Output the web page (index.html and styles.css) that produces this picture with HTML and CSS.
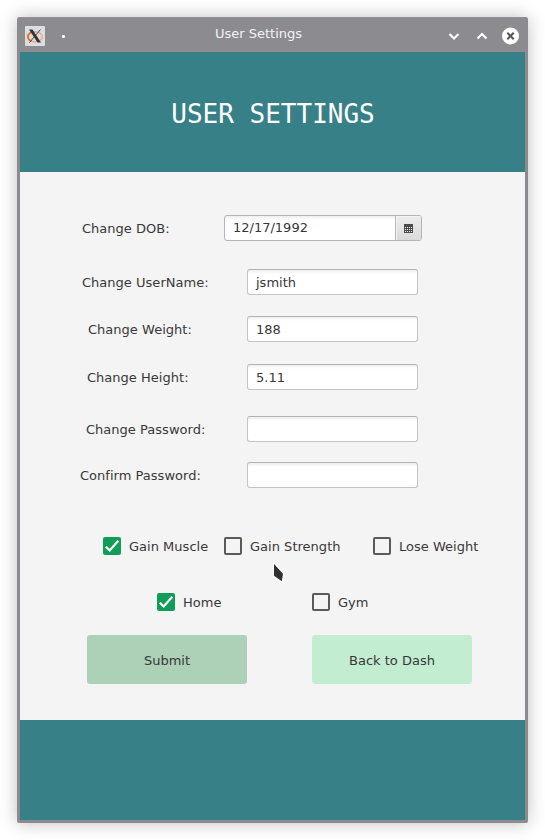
FILE: index.html
```html
<!DOCTYPE html>
<html lang="en">
<head>
<meta charset="utf-8">
<title>User Settings</title>
<link rel="stylesheet" href="styles.css">
</head>
<body>
<div class="window">
  <div class="titlebar">
    <svg class="app-icon" width="20" height="20" viewBox="0 0 20 20">
      <rect width="20" height="20" rx="1" fill="#d9dfe1"/>
      <ellipse cx="10" cy="10.800" rx="7.400" ry="5" fill="none" stroke="#f3a878" stroke-width="1.400"/>
      <path d="M6 6.600C1.800 8.500 1.800 13 6.500 15.300" fill="none" stroke="#ee6b20" stroke-width="1.700"/>
      <path d="M15.500 3.500L4.500 16.500" stroke="#444" stroke-width="1"/>
      <path d="M4 3.500H7.500L16 16.500H12.500Z" fill="#303438"/>
    </svg>
    <span class="pin"></span>
    <span class="caption">User Settings</span>
    <svg class="controls" width="75" height="18" viewBox="0 0 75 18">
      <path d="M4.500 7L9 11.500L13.500 7M32.500 11.500L37 7L41.500 11.500" fill="none" stroke="#fff" stroke-width="2.200"/>
      <circle cx="65.500" cy="9" r="8.500" fill="#fff"/>
      <path d="M62.300 5.800L68.700 12.200M68.700 5.800L62.300 12.200" stroke="#55565a" stroke-width="2"/>
    </svg>
  </div>
  <header class="header"><h1>USER SETTINGS</h1></header>
  <main class="body">
    <div class="row dob"><label>Change DOB:</label>
      <div class="date"><span class="date-text">12/17/1992</span><span class="date-button">
        <svg width="9" height="9" viewBox="0 0 9 9" shape-rendering="crispEdges">
          <path d="M0 0H9V9H0Z" fill="#4c4c4c"/>
          <path d="M1 3.500H8M1 5.500H8M1 7.500H8" stroke="#e8e8e8" stroke-width="1" stroke-dasharray="1 1"/>
        </svg></span></div>
    </div>
    <div class="row username"><label>Change UserName:</label><div class="field">jsmith</div></div>
    <div class="row weight"><label>Change Weight:</label><div class="field">188</div></div>
    <div class="row height"><label>Change Height:</label><div class="field">5.11</div></div>
    <div class="row password"><label>Change Password:</label><div class="field"></div></div>
    <div class="row confirm"><label>Confirm Password:</label><div class="field"></div></div>
    <div class="checks goals">
      <div class="check"><span class="box on"><svg width="18" height="18" viewBox="0 0 18 18"><path d="M2.800 9.600L6.700 13.500L15.300 3.800" fill="none" stroke="#fff" stroke-width="2.200"/></svg></span><span class="text">Gain Muscle</span></div>
      <div class="check"><span class="box"></span><span class="text">Gain Strength</span></div>
      <div class="check"><span class="box"></span><span class="text">Lose Weight</span></div>
    </div>
    <div class="checks places">
      <div class="check"><span class="box on"><svg width="18" height="18" viewBox="0 0 18 18"><path d="M2.800 9.600L6.700 13.500L15.300 3.800" fill="none" stroke="#fff" stroke-width="2.200"/></svg></span><span class="text">Home</span></div>
      <div class="check"><span class="box"></span><span class="text">Gym</span></div>
    </div>
    <div class="actions"><div class="button submit">Submit</div><div class="button back">Back to Dash</div></div>
  </main>
  <footer class="footer"></footer>
</div>
<svg class="cursor" width="14" height="24" viewBox="0 0 14 24">
  <path d="M2 2L11 11.800L9.800 19.200L2 13.800Z" fill="#303030" stroke="#fff" stroke-width="2" stroke-linejoin="round" paint-order="stroke"/>
</svg>
</body>
</html>
```
FILE: styles.css
```css
* { box-sizing: border-box; }
body {
  margin: 0;
  padding: 17px 17px 0;
  height: 840px;
  overflow: hidden;
  background: #fff;
  font: 13px/16px "DejaVu Sans", sans-serif;
  color: #383838;
}
.window {
  width: 511px;
  height: 806px;
  padding: 0 3px 3px;
  background: #8b8b90;
  border-radius: 3px 3px 2px 2px;
  box-shadow: inset 0 1px #929297, 0 0 18px rgba(0, 0, 0, .26);
}
.titlebar { display: flex; height: 35px; padding-left: 5px; color: #f3f3f3; }
.app-icon { margin-top: 9px; }
.pin { width: 3px; height: 3px; margin: 18px 0 0 17px; border-radius: 1px; background: #fff; }
.caption { margin: 9px 0 0 150px; width: 87px; white-space: nowrap; }
.controls { margin: 10px 0 0 143px; flex: none; }
.header {
  display: flex;
  height: 120px;
  align-items: center;
  justify-content: center;
  padding: 3px 0 0 1px;
  background: #388087;
}
.header h1 {
  margin: 0;
  font: 26px/30px "DejaVu Sans Mono", monospace;
  color: #fff;
}
.body { height: 548px; padding-top: 43px; background: #f4f4f4; }
.row { display: flex; height: 26px; align-items: center; padding-left: 62px; }
.row label { width: 165px; padding-top: 2px; white-space: nowrap; }
.row label, .text { letter-spacing: .02px; }
.dob label { width: 142px; }
.username { margin-top: 28px; }
.weight { margin-top: 21px; padding-left: 68px; }
.weight label { width: 159px; }
.height { margin-top: 22px; padding-left: 67px; }
.height label { width: 160px; }
.password { margin-top: 26px; padding-left: 66px; }
.password label { width: 161px; }
.confirm { margin-top: 20px; padding-left: 60px; }
.confirm label { width: 167px; }
.field, .date {
  height: 26px;
  border: 1px solid #c4c4c4;
  border-top-color: #b2b2b2;
  border-radius: 3px;
  background: linear-gradient(#eee, #fff 4px);
}
.field { width: 171px; padding: 5px 8px 3px; }
.date { display: flex; width: 198px; border-color: #b5b5b5; }
.date-text { width: 170px; padding: 4px 8px; }
.date-button {
  display: flex;
  width: 26px;
  align-items: center;
  justify-content: center;
  border-left: 1px solid #b5b5b5;
  border-radius: 0 2px 2px 0;
  background: linear-gradient(#ededed, #dadada);
  box-shadow: inset 1px 1px #f4f4f4;
}
.checks { display: grid; height: 18px; }
.goals { margin-top: 49px; padding-left: 83px; grid-template-columns: 121px 149px 120px; }
.places { margin-top: 38px; padding-left: 137px; grid-template-columns: 155px 100px; }
.check { display: flex; height: 18px; align-items: center; gap: 8px; white-space: nowrap; }
.text { padding-top: 2px; }
.box {
  width: 18px;
  height: 18px;
  flex: none;
  border: 2px solid #5a5a5a;
  border-radius: 2px;
}
.box.on { border: 0; background: #0f9d58; }
.box svg { display: block; }
.actions { display: flex; gap: 65px; margin-top: 24px; padding-left: 67px; }
.button {
  width: 160px;
  height: 49px;
  padding-top: 1px;
  border-radius: 3px;
  text-align: center;
  line-height: 49px;
}
.submit { background: #acd1b7; }
.back { background: #c3edd0; }
.footer { height: 100px; background: #388087; }
.cursor { position: absolute; left: 272px; top: 562px; }
```
